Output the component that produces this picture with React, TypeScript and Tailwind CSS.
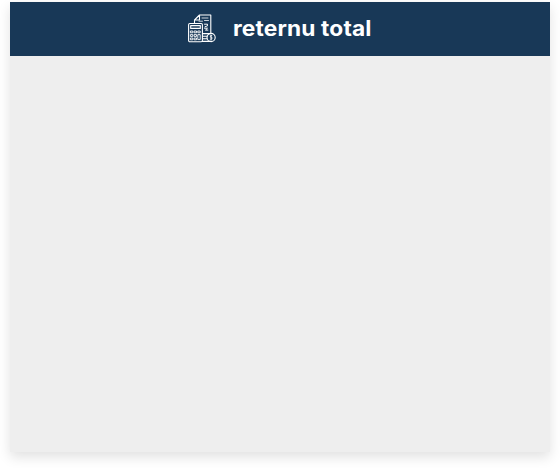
function DocumentsIcon() {
  return (
    <svg
      viewBox="0 0 28 29"
      className="mb-0.5 h-[29px] w-7 shrink-0"
      fill="none"
      stroke="#fff"
      strokeWidth="1.1"
      strokeLinejoin="round"
      strokeLinecap="round"
      aria-hidden="true"
    >
      <path d="M6.5 9V6l5-5h11.3v18.3M6.5 6h5V1" />
      <path d="M14 4h6M11 7.2h3.5M16.5 6.5h4" strokeWidth="0.8" />
      <path d="M16.5 10.2h3v1.6l-2.5 1M16.5 14.2h3l-2 1.9h2.4" strokeWidth="1" />
      <rect x="0.6" y="9.5" width="13.8" height="18.3" rx="1.2" />
      <rect x="2.7" y="11.6" width="9.6" height="2.8" />
      <path
        d="M2.8 17h2v1.8h-2zM6.5 17h2v1.8h-2zM10.2 17h2v1.8h-2zM2.8 20.6h2v1.8h-2zM6.5 20.6h2v1.8h-2zM10.2 20.6h2v5h-2zM2.8 24h2v1.8h-2zM6.5 24h2v1.8h-2z"
        strokeWidth="0.9"
      />
      <path d="M14.5 19.6h8M14.5 22.2h4.6M14.5 24.8h4.4M14.5 27.4h9" />
      <circle cx="23.1" cy="23.5" r="4.1" />
      <path d="M23.8 21.6h-1.4v1.6h1.5v1.9h-1.6M23.1 21v4.8" strokeWidth="0.8" />
    </svg>
  );
}

export default function App() {
  return (
    <main className="h-[470px] overflow-hidden bg-white px-2.5 pt-0.5">
      <section className="h-[450px] bg-[#eeeeee] shadow-[0_5px_12px_rgba(0,0,0,0.12)]">
        <header className="flex h-[54px] items-center bg-[#183857] pl-[178px] text-white">
          <DocumentsIcon />
          <h1 className="ml-[17px] origin-left scale-x-[1.08] whitespace-nowrap font-['Inter',sans-serif] text-[21px] leading-7 font-bold tracking-[0.15px]">
            reternu total
          </h1>
        </header>
      </section>
    </main>
  );
}
